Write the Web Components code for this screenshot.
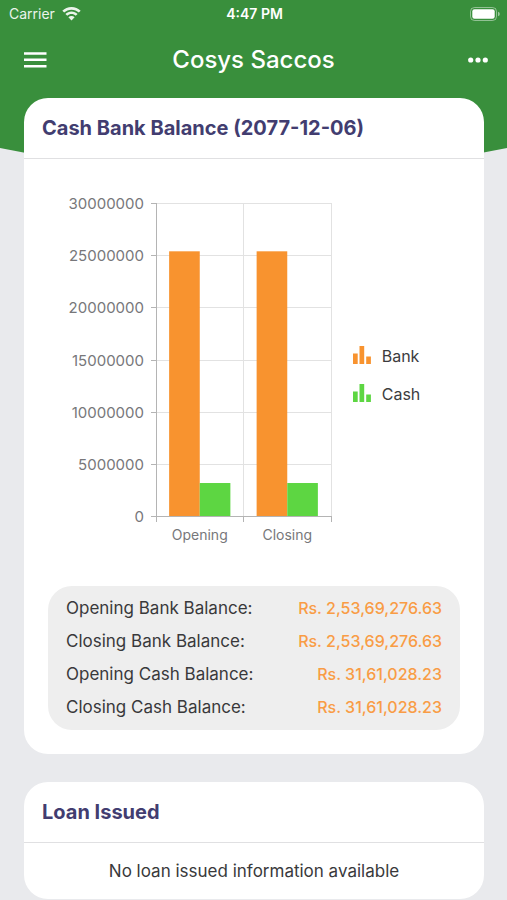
<!DOCTYPE html>
<html lang="en">
<head>
  <meta charset="utf-8">
  <meta name="viewport" content="width=device-width, initial-scale=1">
  <title>Cosys Saccos</title>
  <style>
    body {
      margin: 0;
      background: #e9eaed;
      font-family: Inter, "Liberation Sans", sans-serif;
    }
  </style>
</head>
<body>
  <saccos-app>
    <status-bar slot="top" carrier="Carrier" time="4:47 PM"></status-bar>
    <app-bar slot="top">Cosys Saccos</app-bar>

    <info-card>
      <span slot="title">Cash Bank Balance (2077-12-06)</span>
      <balance-chart></balance-chart>
      <balance-summary></balance-summary>
    </info-card>

    <info-card class="compact">
      <span slot="title">Loan Issued</span>
      <empty-note>No loan issued information available</empty-note>
    </info-card>
  </saccos-app>

  <script>
    const ORANGE = "#f8932f";
    const GREEN = "#5dd642";

    class SaccosApp extends HTMLElement {
      constructor() {
        super();
        this.attachShadow({ mode: "open" });
      }

      static get styles() {
        return /* css */`
          :host {
            display: block;
            position: relative;
            z-index: 0;
          }

          .backdrop {
            position: absolute;
            z-index: -1;
            top: 0;
            left: 0;
            width: 100%;
            height: 180px;
            fill: #398f3c;
          }

          main {
            display: flex;
            flex-direction: column;
            gap: 28px;
            padding: 6px 23px 1px 24px;
          }
        `;
      }

      connectedCallback() {
        this.render();
      }

      render() {
        this.shadowRoot.innerHTML = /* html */`
        <style>${SaccosApp.styles}</style>
        <svg class="backdrop" viewBox="0 0 500 180" preserveAspectRatio="none" aria-hidden="true">
          <path d="M0 0H500V148Q250 200 0 148Z"/>
        </svg>
        <header><slot name="top"></slot></header>
        <main><slot></slot></main>`;
      }
    }

    class StatusBar extends HTMLElement {
      constructor() {
        super();
        this.attachShadow({ mode: "open" });
      }

      static get styles() {
        return /* css */`
          :host {
            display: grid;
            grid-template-columns: 1fr auto 1fr;
            align-items: center;
            height: 28px;
            padding: 0 7px 0 9px;
            color: #fff;
            font-size: 14px;
            line-height: 20px;
          }

          .carrier {
            display: flex;
            align-items: center;
            gap: 7px;
            opacity: .9;
          }

          .time {
            font-weight: 600;
          }

          .battery {
            justify-self: end;
          }
        `;
      }

      connectedCallback() {
        this.render();
      }

      render() {
        this.shadowRoot.innerHTML = /* html */`
        <style>${StatusBar.styles}</style>
        <div class="carrier">
          <span>${this.getAttribute("carrier")}</span>
          <svg width="19" height="14" viewBox="0 0 19 14" fill="#fff" aria-hidden="true">
            <path d="M9.500 0C5.900 0 2.700 1.400.300 3.700L2.200 5.600C4.100 3.800 6.700 2.700 9.500 2.700S14.900 3.800 16.800 5.600L18.700 3.700C16.300 1.400 13.100 0 9.500 0Z"/>
            <path d="M9.500 4.500C7.100 4.500 5 5.400 3.400 6.900L5.300 8.800C6.400 7.800 7.900 7.100 9.500 7.100S12.600 7.800 13.700 8.800L15.600 6.900C14 5.400 11.900 4.500 9.500 4.500Z"/>
            <path d="M9.500 9C8.300 9 7.200 9.400 6.400 10.200L9.500 13.500 12.600 10.200C11.800 9.400 10.700 9 9.500 9Z"/>
          </svg>
        </div>
        <div class="time">${this.getAttribute("time")}</div>
        <svg class="battery" width="30" height="14" viewBox="0 0 30 14" aria-hidden="true">
          <rect x=".5" y=".5" width="26" height="13" rx="4" fill="none" stroke="#fff" stroke-opacity=".45"/>
          <rect x="2.300" y="2.300" width="22.400" height="9.400" rx="2.200" fill="#fff"/>
          <path d="M28 4.700Q29.800 5.300 29.800 7T28 9.300Z" fill="#fff" fill-opacity=".5"/>
        </svg>`;
      }
    }

    class AppBar extends HTMLElement {
      constructor() {
        super();
        this.attachShadow({ mode: "open" });
      }

      static get styles() {
        return /* css */`
          :host {
            display: grid;
            grid-template-columns: 48px 1fr 48px;
            align-items: center;
            height: 64px;
            padding: 0 11px;
            color: #fff;
          }

          button {
            display: flex;
            align-items: center;
            justify-content: center;
            height: 48px;
            padding: 0;
            border: 0;
            background: none;
            color: inherit;
          }

          .more {
            justify-content: flex-end;
            padding-right: 8px;
          }

          h1 {
            margin: 0;
            font-size: 24px;
            font-weight: 500;
            line-height: 32px;
            text-align: center;
          }
        `;
      }

      connectedCallback() {
        this.render();
      }

      render() {
        this.shadowRoot.innerHTML = /* html */`
        <style>${AppBar.styles}</style>
        <button type="button" aria-label="Menu">
          <svg width="24" height="16" viewBox="0 0 24 16" fill="currentColor">
            <path d="M1 .2H23.500V2.700H1ZM1 6.600H23.500V9.100H1ZM1 12.900H23.500V15.400H1Z"/>
          </svg>
        </button>
        <h1><slot></slot></h1>
        <button type="button" class="more" aria-label="More">
          <svg width="20" height="6" viewBox="0 0 20 6" fill="currentColor">
            <circle cx="2.700" cy="3" r="2.600"/>
            <circle cx="10" cy="3" r="2.600"/>
            <circle cx="17.300" cy="3" r="2.600"/>
          </svg>
        </button>`;
      }
    }

    class InfoCard extends HTMLElement {
      constructor() {
        super();
        this.attachShadow({ mode: "open" });
      }

      static get styles() {
        return /* css */`
          :host {
            display: block;
            border-radius: 24px;
            background: #fff;
          }

          h2 {
            margin: 0;
            padding: 16px 18px;
            border-bottom: 1px solid #e0e0e2;
            color: #423d70;
            font-size: 20px;
            font-weight: 700;
            line-height: 28px;
          }

          .body {
            display: flex;
            flex-direction: column;
            gap: 24px;
            padding: 28px 24px 24px;
          }

          :host(.compact) .body {
            padding: 16px 24px;
          }
        `;
      }

      connectedCallback() {
        this.render();
      }

      render() {
        this.shadowRoot.innerHTML = /* html */`
        <style>${InfoCard.styles}</style>
        <h2><slot name="title"></slot></h2>
        <div class="body"><slot></slot></div>`;
      }
    }

    class BalanceChart extends HTMLElement {
      constructor() {
        super();
        this.attachShadow({ mode: "open" });
        this.max = 30000000;
        this.step = 5000000;
        this.groups = ["Opening", "Closing"];
        this.series = [
          { name: "Bank", color: ORANGE, values: [25369276.63, 25369276.63] },
          { name: "Cash", color: GREEN, values: [3161028.23, 3161028.23] },
        ];
      }

      static get styles() {
        return /* css */`
          :host {
            display: flex;
            align-items: center;
            justify-content: center;
            gap: 16px;
            padding-right: 24px;
          }

          .grid {
            stroke: #e2e2e2;
          }

          .axis {
            stroke: #b4b4b4;
          }

          text {
            fill: #77777a;
            font-size: 15px;
          }

          .group {
            font-size: 14px;
          }

          ul {
            display: flex;
            flex-direction: column;
            gap: 18px;
            margin: 0;
            padding: 0;
            list-style: none;
            color: #3c3c3e;
            font-size: 16px;
            line-height: 20px;
          }

          li {
            display: flex;
            align-items: center;
            gap: 10px;
          }
        `;
      }

      connectedCallback() {
        this.render();
      }

      plot() {
        const left = 92, top = 16, width = 175, height = 313;
        const bottom = top + height;
        const groupWidth = width / this.groups.length;
        const barWidth = groupWidth * .35;
        let lines = "", axis = "", bars = "", labels = "";

        for (let v = 0; v <= this.max; v += this.step) {
          const y = Math.round(bottom - v / this.max * height) + .5;
          lines += `<path class="grid" d="M${left} ${y}H${left + width}"/>`;
          axis += `<path class="axis" d="M${left - 5} ${y}H${left}"/>`;
          labels += `<text x="${left - 12}" y="${y + 5}" text-anchor="end">${v}</text>`;
        }

        for (let i = 0; i <= this.groups.length; i++) {
          const x = Math.floor(left + i * groupWidth) + .5;
          lines += `<path class="grid" d="M${x} ${top}V${bottom}"/>`;
          axis += `<path class="axis" d="M${x} ${bottom}V${bottom + 6}"/>`;
        }

        this.groups.forEach((name, i) => {
          const start = left + i * groupWidth;
          this.series.forEach((s, j) => {
            const h = s.values[i] / this.max * height;
            const x = start + groupWidth * .15 + j * barWidth;
            bars += `<rect x="${x}" y="${bottom - h}" width="${barWidth}" height="${h}" fill="${s.color}"/>`;
          });
          labels += `<text class="group" x="${start + groupWidth / 2}" y="${bottom + 24}" text-anchor="middle">${name}</text>`;
        });

        axis += `<path class="axis" d="M${left + .5} ${top}V${bottom}M${left} ${bottom + .5}H${left + width}"/>`;
        return lines + bars + axis + labels;
      }

      render() {
        this.shadowRoot.innerHTML = /* html */`
        <style>${BalanceChart.styles}</style>
        <svg width="272" height="375" viewBox="0 0 272 375" role="img" aria-label="Bank and cash balances">
          ${this.plot()}
        </svg>
        <ul>
          ${this.series.map((s) => `<li>
            <svg width="20" height="20" viewBox="0 0 20 20" fill="${s.color}" aria-hidden="true">
              <path d="M1 7.500H5.700V18H1ZM7.500 0H12.200V18H7.500ZM14.200 10.500H18.900V18H14.200Z"/>
            </svg>
            <span>${s.name}</span>
          </li>`).join("")}
        </ul>`;
      }
    }

    class BalanceSummary extends HTMLElement {
      constructor() {
        super();
        this.attachShadow({ mode: "open" });
        this.rows = [
          ["Opening Bank Balance:", "Rs. 2,53,69,276.63"],
          ["Closing Bank Balance:", "Rs. 2,53,69,276.63"],
          ["Opening Cash Balance:", "Rs. 31,61,028.23"],
          ["Closing Cash Balance:", "Rs. 31,61,028.23"],
        ];
      }

      static get styles() {
        return /* css */`
          :host {
            display: block;
            padding: 6px 18px;
            border-radius: 24px;
            background: #eee;
          }

          dl {
            margin: 0;
          }

          div {
            display: flex;
            justify-content: space-between;
            line-height: 33px;
          }

          dt {
            color: #39393b;
            font-size: 17px;
          }

          dd {
            margin: 0;
            color: #f99c45;
            font-size: 16px;
            font-weight: 500;
          }
        `;
      }

      connectedCallback() {
        this.render();
      }

      render() {
        this.shadowRoot.innerHTML = /* html */`
        <style>${BalanceSummary.styles}</style>
        <dl>
          ${this.rows.map(([label, value]) => `<div><dt>${label}</dt><dd>${value}</dd></div>`).join("")}
        </dl>`;
      }
    }

    class EmptyNote extends HTMLElement {
      constructor() {
        super();
        this.attachShadow({ mode: "open" });
      }

      static get styles() {
        return /* css */`
          :host {
            display: block;
            color: #39393b;
            font-size: 17px;
            line-height: 24px;
            text-align: center;
          }
        `;
      }

      connectedCallback() {
        this.render();
      }

      render() {
        this.shadowRoot.innerHTML = /* html */`
        <style>${EmptyNote.styles}</style>
        <slot></slot>`;
      }
    }

    customElements.define("saccos-app", SaccosApp);
    customElements.define("status-bar", StatusBar);
    customElements.define("app-bar", AppBar);
    customElements.define("info-card", InfoCard);
    customElements.define("balance-chart", BalanceChart);
    customElements.define("balance-summary", BalanceSummary);
    customElements.define("empty-note", EmptyNote);
  </script>
</body>
</html>
